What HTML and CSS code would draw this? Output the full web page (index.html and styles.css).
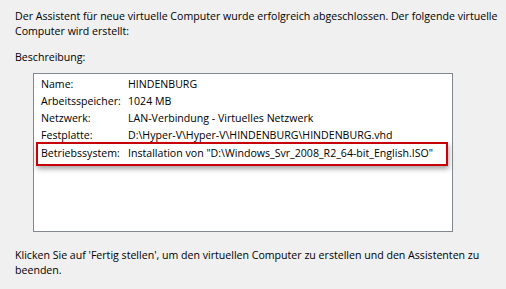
FILE: index.html
```html
<!DOCTYPE html>
<html lang="de">
<head>
<meta charset="utf-8">
<link rel="stylesheet" href="styles.css">
</head>
<body>
<div class="page">
  <p class="intro">Der Assistent für neue virtuelle Computer wurde erfolgreich abgeschlossen. Der folgende virtuelle Computer wird erstellt:</p>
  <p class="label">Beschreibung:</p>
  <div class="box">
    <div class="row"><span class="key">Name:</span><span class="val">HINDENBURG</span></div>
    <div class="row"><span class="key">Arbeitsspeicher:</span><span class="val">1024 MB</span></div>
    <div class="row"><span class="key">Netzwerk:</span><span class="val">LAN-Verbindung - Virtuelles Netzwerk</span></div>
    <div class="row"><span class="key">Festplatte:</span><span class="val">D:\Hyper-V\Hyper-V\HINDENBURG\HINDENBURG.vhd</span></div>
    <div class="row mark"><span class="key">Betriebssystem:</span><span class="val">Installation von "D:\Windows_Svr_2008_R2_64-bit_English.ISO"</span></div>
  </div>
  <p class="outro">Klicken Sie auf 'Fertig stellen', um den virtuellen Computer zu erstellen und den Assistenten zu beenden.</p>
</div>
</body>
</html>
```
FILE: styles.css
```css
html, body {
  margin: 0;
  padding: 0;
  background: #f0f0f0;
}
.page {
  width: 506px;
  height: 289px;
  box-sizing: border-box;
  padding: 9px 0 0 15px;
  font-family: "Open Sans", "Noto Sans", sans-serif;
  font-size: 10.6px;
  line-height: 15px;
  color: #000;
  display: flex;
  flex-direction: column;
}
.intro {
  margin: 0;
  width: 488px;
}
.label {
  margin: 11px 0 0 0;
}
.box {
  margin: 8px 0 0 18px;
  width: 420px;
  height: 159px;
  box-sizing: border-box;
  border: 1px solid #828790;
  background: #fff;
  padding: 2px 4px 0 7px;
  display: flex;
  flex-direction: column;
}
.row {
  display: flex;
  height: 17px;
  line-height: 17px;
  white-space: nowrap;
}
.key {
  width: 87px;
  flex: none;
}
.mark {
  margin: -2px 0 0 -5px;
  padding: 1px 0 2px 3px;
  border: 2px solid #c80008;
  box-shadow: 1px 3px 5px rgba(0, 0, 0, 0.35);
}
.outro {
  margin: 16px 0 0 0;
  width: 480px;
}
```
